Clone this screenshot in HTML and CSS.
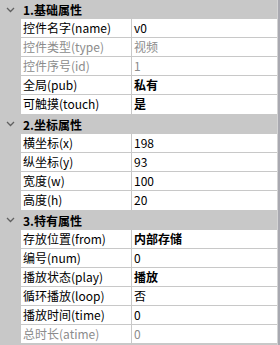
FILE: index.html
```html
<!DOCTYPE html>
<html lang="zh-CN">

<head>
    <meta charset="UTF-8">
    <title>属性</title>
    <link rel="stylesheet" href="styles.css">
</head>

<body>
    <div class="panel">
        <div class="group first">
            <span class="arrow"><svg width="9" height="6" viewBox="0 0 9 6"><path d="M1 1 L4.5 4.5 L8 1" fill="none" stroke="#606060" stroke-width="1.3"/></svg></span>
            <span class="group-title">1.基础属性</span>
        </div>
        <div class="row"><div class="key">控件名字(name)</div><div class="val">v0</div></div>
        <div class="row off"><div class="key">控件类型(type)</div><div class="val">视频</div></div>
        <div class="row off"><div class="key">控件序号(id)</div><div class="val">1</div></div>
        <div class="row"><div class="key">全局(pub)</div><div class="val bold">私有</div></div>
        <div class="row last"><div class="key">可触摸(touch)</div><div class="val bold">是</div></div>

        <div class="group">
            <span class="arrow"><svg width="9" height="6" viewBox="0 0 9 6"><path d="M1 1 L4.5 4.5 L8 1" fill="none" stroke="#606060" stroke-width="1.3"/></svg></span>
            <span class="group-title">2.坐标属性</span>
        </div>
        <div class="row"><div class="key">横坐标(x)</div><div class="val">198</div></div>
        <div class="row"><div class="key">纵坐标(y)</div><div class="val">93</div></div>
        <div class="row"><div class="key">宽度(w)</div><div class="val">100</div></div>
        <div class="row last"><div class="key">高度(h)</div><div class="val">20</div></div>

        <div class="group">
            <span class="arrow"><svg width="9" height="6" viewBox="0 0 9 6"><path d="M1 1 L4.5 4.5 L8 1" fill="none" stroke="#606060" stroke-width="1.3"/></svg></span>
            <span class="group-title">3.特有属性</span>
        </div>
        <div class="row"><div class="key">存放位置(from)</div><div class="val bold">内部存储</div></div>
        <div class="row"><div class="key">编号(num)</div><div class="val">0</div></div>
        <div class="row"><div class="key">播放状态(play)</div><div class="val bold">播放</div></div>
        <div class="row"><div class="key">循环播放(loop)</div><div class="val">否</div></div>
        <div class="row"><div class="key">播放时间(time)</div><div class="val">0</div></div>
        <div class="row off"><div class="key">总时长(atime)</div><div class="val">0</div></div>
    </div>
</body>

</html>
```

FILE: styles.css
```css
body {
    margin: 0;
    background-color: #c8c8c8;
    font-family: "Microsoft YaHei", "Noto Sans CJK SC", sans-serif;
    font-size: 12px;
    color: #000000;
}

.panel {
    width: 277px;
    height: 345px;
    background-color: #c8c8c8;
    border-right: 1px solid #d4d4d4;
    box-shadow: 2px 0 0 #a8a8b0;
}

/* group headers */
.group {
    height: 20px;
    display: flex;
    align-items: center;
}

.group.first {
    height: 19px;
}

.arrow {
    width: 22px;
    display: flex;
    justify-content: center;
    padding-right: 2px;
    box-sizing: border-box;
}

.group-title {
    font-weight: bold;
    padding-left: 1px;
}

/* property rows */
.row {
    display: flex;
    height: 19px;
    margin-left: 21px;
    border-bottom: 1px solid #c8c8c8;
    box-sizing: border-box;
}

.row.last {
    border-bottom: none;
}

.key {
    width: 108px;
    background-color: #ffffff;
    border-right: 1px solid #c8c8c8;
    padding-left: 2px;
    line-height: 18px;
    white-space: nowrap;
    overflow: hidden;
}

.val {
    flex: 1;
    background-color: #ffffff;
    padding-left: 2px;
    line-height: 18px;
}

.bold {
    font-weight: bold;
}

.off .key,
.off .val {
    color: #8c8c8c;
}
```
